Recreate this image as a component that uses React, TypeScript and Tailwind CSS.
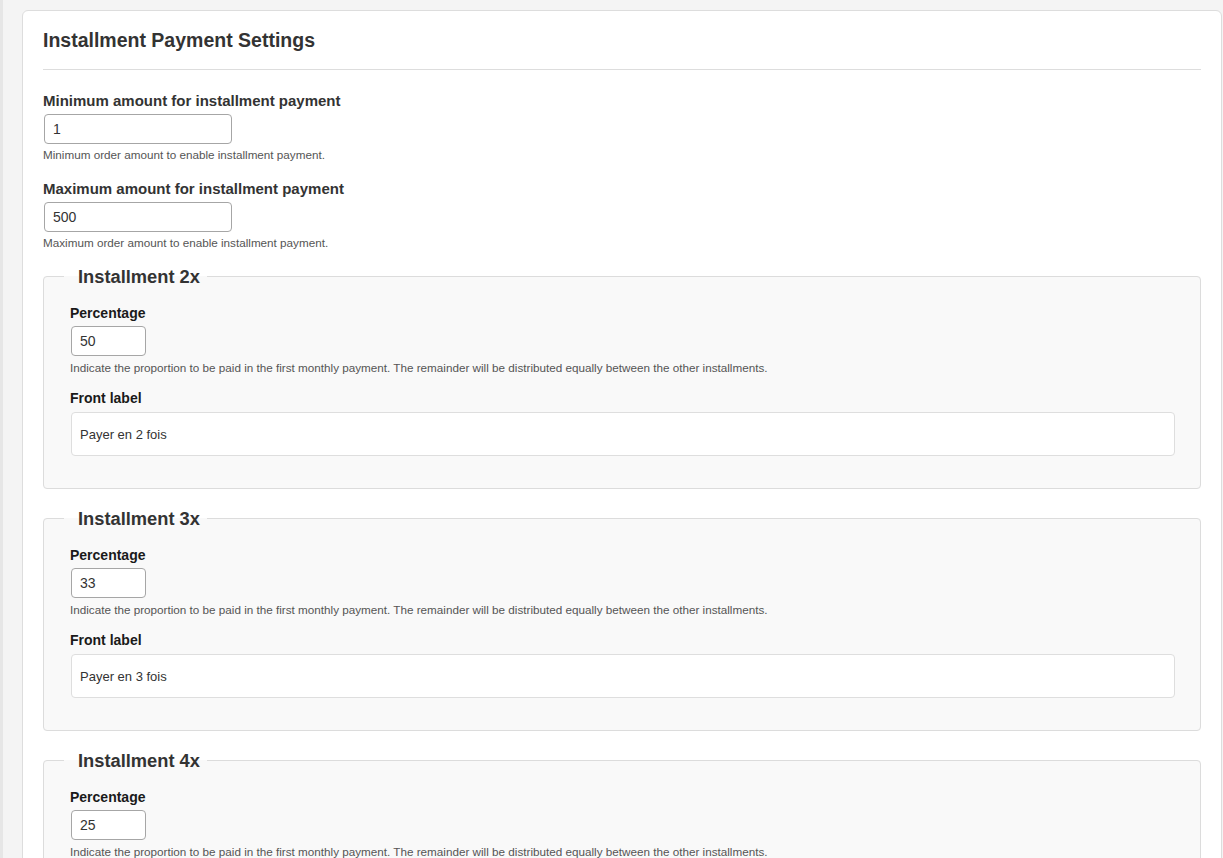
const font = { fontFamily: '"Liberation Sans", Arial, sans-serif' }

function Installment({ n, pct, first }: { n: number; pct: string; first?: boolean }) {
    return (
        <fieldset
            className={
                (first ? 'mt-[15px] ' : 'mt-[19px] ') +
                'border border-[#dcdcdc] rounded-[4px] bg-[#f9f9f9] pl-[20px] pr-[25px] pt-[16px] pb-[32px]'
            }
        >
            <legend className="pl-[14px] pr-[7px] text-[18.3px] leading-[21px] font-bold text-[#333]">Installment {n}x</legend>
            <div className="pl-[6px]">
                <label className="block text-[14px] leading-[20px] font-bold text-[#1a1a1a]">Percentage</label>
                <input
                    readOnly
                    value={pct}
                    className="mt-[3px] ml-[1px] block w-[75px] h-[30px] px-[8px] text-[14px] text-[#333] bg-white border border-[#a6a6a6] rounded-[4px] outline-none"
                />
                <p className="mt-[4px] text-[11.7px] leading-[16px] text-[#555]">
                    Indicate the proportion to be paid in the first monthly payment. The remainder will be distributed equally between the other installments.
                </p>
                <label className="mt-[12px] block text-[14px] leading-[20px] font-bold text-[#1a1a1a]">Front label</label>
                <input
                    readOnly
                    value={`Payer en ${n} fois`}
                    className="mt-[4px] ml-[1px] block w-[calc(100%-1px)] h-[44px] px-[8px] text-[13px] text-[#333] bg-white border border-[#dedede] rounded-[4px] outline-none"
                />
            </div>
        </fieldset>
    )
}

export default function App() {
    return (
        <div style={font} className="min-h-screen bg-[#f4f4f4] flex">
            <div className="w-[3px] shrink-0 bg-[#e6e6e6]" />
            <div className="flex-1 pl-[19px] pr-[1px] pt-[10px]">
                <div className="bg-white border border-[#dddddd] rounded-[6px] px-[20px] pt-[16px] pb-[20px]">
                    <h2 className="text-[19.5px] leading-[26px] font-bold text-[#333]">Installment Payment Settings</h2>
                    <hr className="mt-[16px] border-t border-[#dddddd]" />

                    <div className="mt-[21px]">
                        <label className="block text-[15px] leading-[20px] font-bold text-[#333]">Minimum amount for installment payment</label>
                        <input
                            readOnly
                            value="1"
                            className="mt-[3px] ml-[1px] block w-[188px] h-[30px] px-[8px] text-[14px] text-[#333] bg-white border border-[#a6a6a6] rounded-[4px] outline-none"
                        />
                        <p className="mt-[3px] text-[11.7px] leading-[16px] text-[#555]">Minimum order amount to enable installment payment.</p>
                    </div>

                    <div className="mt-[16px]">
                        <label className="block text-[15px] leading-[20px] font-bold text-[#333]">Maximum amount for installment payment</label>
                        <input
                            readOnly
                            value="500"
                            className="mt-[3px] ml-[1px] block w-[188px] h-[30px] px-[8px] text-[14px] text-[#333] bg-white border border-[#a6a6a6] rounded-[4px] outline-none"
                        />
                        <p className="mt-[3px] text-[11.7px] leading-[16px] text-[#555]">Maximum order amount to enable installment payment.</p>
                    </div>

                    <Installment n={2} pct="50" first />
                    <Installment n={3} pct="33" />
                    <Installment n={4} pct="25" />
                </div>
            </div>
        </div>
    )
}
